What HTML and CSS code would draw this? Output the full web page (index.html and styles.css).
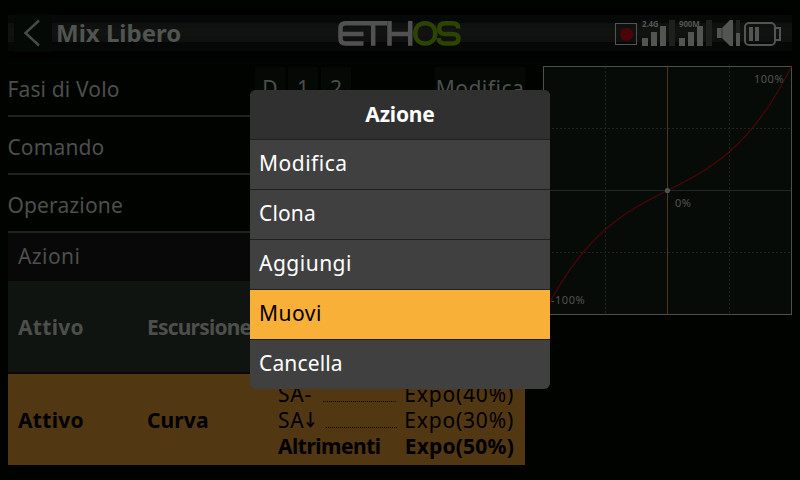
FILE: index.html
```html
<!DOCTYPE html>
<html lang="it">
<head>
<meta charset="utf-8">
<title>Mix Libero</title>
<link rel="stylesheet" href="styles.css">
</head>
<body>
<header class="topbar">
  <div class="back"><svg width="38" height="38" viewBox="0 0 38 38"><path d="M25 6.500 11.500 19 25 31.500" fill="none" stroke="#474b48" stroke-width="2.400"/></svg></div>
  <h1 class="title">Mix Libero</h1>
  <svg class="logo" width="124" height="26" viewBox="0 0 124 26" fill="none" stroke-width="4.500">
    <path d="M49 3.200H7.500Q2.500 3.200 2.500 8V18.500Q2.500 23.500 7.500 23.500H25.500M2.500 14H25.500M35.200 3.200V25.700M51.500 1V25.700M51.500 14H72M72.200 1V25.700" stroke="#515151"/>
    <path d="M87.200 3.200C94 3.200 97.200 8 97.200 13.400C97.200 19 94 23.500 87.200 23.500C80.500 23.500 77.300 19 77.300 13.400C77.300 8 80.500 3.200 87.200 3.200ZM120.400 8.500Q120.400 3.200 114.500 3.200H107Q101.200 3.200 101.200 8.500Q101.200 14 107 14H114.500Q120.400 14 120.400 18.500Q120.400 23.500 114.500 23.500H107Q101.200 23.500 100.500 18" stroke="#2d4300"/>
  </svg>
  <svg class="status" width="168" height="30" viewBox="0 0 168 30">
    <rect x=".5" y="4.500" width="21" height="21" fill="none" stroke="#515451"/>
    <circle cx="11.700" cy="15.300" r="6.500" fill="#4c0507"/>
    <path d="M54 1h6v26h-6zM91 1h6v26h-6zM121 1h4v13h-4z" fill="#1d211e"/>
    <g fill="#515652"><path d="M27 19h6v8h-6zM36 13h6v14h-6zM45 7h6v20h-6zM64 19h6v8h-6zM73 13h6v14h-6zM82 7h6v20h-6zM121 14h4v13h-4z"/>
    <path d="M102 9h5L115 1h3v26h-3L107 19h-5z"/>
    <path d="M134 8h4v14h-4zM140 8h4v14h-4z"/></g>
    <path d="M107 9v10" stroke="#343734"/>
    <g fill="none" stroke="#515652" stroke-width="2"><rect x="130" y="4" width="30" height="22" rx="4"/><path d="M161 9h4v12h-4"/></g>
    <text x="27" y="8">2.4G</text><text x="64" y="8">900M</text>
  </svg>
</header>
<main class="content">
  <section class="settings">
    <div class="row"><span class="label">Fasi di Volo</span>
      <span class="phases"><b class="chip">D</b><b class="chip">1</b><b class="chip">2</b></span>
      <span class="edit">Modifica</span></div>
    <div class="row"><span class="label">Comando</span></div>
    <div class="row"><span class="label">Operazione</span></div>
    <div class="group">Azioni</div>
    <div class="action">
      <span class="state">Attivo</span><span class="kind tight">Escursione</span>
    </div>
    <div class="action selected">
      <span class="state">Attivo</span><span class="kind">Curva</span>
      <div class="cases">
        <div class="case"><span>SA-</span><i class="dots"></i><span>Expo(40%)</span></div>
        <div class="case"><span>SA<svg class="down" width="9" height="16" viewBox="0 0 9 16"><path d="M4.500 0V14M1 10.500 4.500 14.500 8 10.500" fill="none" stroke="#000" stroke-width="1.800"/></svg></span><i class="dots"></i><span>Expo(30%)</span></div>
        <div class="case last"><span class="tight">Altrimenti</span><span>Expo(50%)</span></div>
      </div>
    </div>
  </section>
  <svg class="chart" width="249" height="249" viewBox="0 0 249 249">
    <rect x=".5" y=".5" width="248" height="248" fill="#070b08" stroke="#4c504d"/>
    <path d="M62.500 1V248M186.500 1V248M1 62.500H248M1 186.500H248" stroke="#202421" stroke-dasharray="2 2"/>
    <path d="M1 124.500H248" stroke="#232724"/>
    <path d="M124.500 0V249" stroke="#513712"/>
    <path d="M.5 248.500C83.200 83.200 165.800 165.800 248.500 .5" fill="none" stroke="#4c0507" stroke-width="1.200"/>
    <circle cx="124.500" cy="124.500" r="2.600" fill="#505450"/>
    <text x="211" y="17">100%</text><text x="132" y="141">0%</text><text x="8" y="238">-100%</text>
  </svg>
</main>
<div class="menu">
  <div class="menu-title">Azione</div>
  <div class="item wide">Modifica</div>
  <div class="item">Clona</div>
  <div class="item wide">Aggiungi</div>
  <div class="item wide active">Muovi</div>
  <div class="item">Cancella</div>
</div>
</body>
</html>
```
FILE: styles.css
```css
* { box-sizing: border-box; }
body {
  margin: 0;
  width: 800px;
  height: 480px;
  overflow: hidden;
  background: #000300;
  color: #4c4f4c;
  font: 21px/30px "Noto Sans", sans-serif;
  letter-spacing: .15px;
}
.topbar {
  display: flex;
  align-items: center;
  height: 50px;
  margin: 8px 8px 0;
  padding-left: 6px;
  background: linear-gradient(#000 0 7px, #070908 7px 15px, #0f100f 15px 20px, #101310 20px 28px, #0f100f 28px 34px, #060807 34px 43px, #000 43px);
}
.back { display: flex; width: 38px; height: 38px; background: #050906; }
.title { margin: 0 0 0 4px; width: 282px; font-size: 24px; line-height: 30px; letter-spacing: 0; color: #515451; }
.logo { flex: none; }
.status { flex: none; margin: 1px 0 0 153px; overflow: visible; }
.status text { font: 700 8px "Noto Sans", sans-serif; letter-spacing: -.2px; fill: #515652; }
.content { display: flex; gap: 18px; padding: 0 8px; }
.settings { width: 517px; }
.row { display: flex; height: 58px; padding-top: 4px; align-items: center; border-bottom: 2px solid #1f2220; }
.row:first-child { height: 59px; }
.label { width: 247px; text-indent: -.6px; }
.phases { display: flex; gap: 3px; width: 180px; }
.chip { width: 30px; height: 43px; line-height: 42px; text-align: center; font-weight: 400; background: #050906; }
.edit { width: 90px; height: 43px; line-height: 42px; text-align: center; letter-spacing: .5px; background: #050906; }
.group { height: 48px; padding: 0 10px; line-height: 47px; letter-spacing: .4px; background: #080808; }
.action { display: flex; align-items: center; height: 93px; padding: 0 10px; background: #0f1410; border-bottom: 2px solid #060706; font-weight: 700; letter-spacing: .1px; }
.action.selected { height: 91px; border: 0; background: #513712; color: #000; }
.state { width: 129px; letter-spacing: .3px; }
.kind { width: 131px; }
.tight { letter-spacing: -.8px; }
.cases { flex: 1; margin-right: 1px; font-weight: 400; letter-spacing: .8px; }
.case { display: flex; justify-content: space-between; height: 26px; line-height: 26px; }
.case.last { font-weight: 700; letter-spacing: .2px; }
.case .tight { letter-spacing: -.5px; }
.down { margin-left: 1px; }
.dots { flex: 1; height: 1px; margin: 20px 7px 0 11px; background: repeating-linear-gradient(90deg, #000 0 1px, transparent 1px 2px); }
.chart { flex: none; margin-top: 8px; }
.chart text { font: 11px "Noto Sans", sans-serif; letter-spacing: .5px; fill: #505350; }
.menu {
  position: absolute;
  left: 250px;
  top: 90px;
  width: 300px;
  border-radius: 6px;
  overflow: hidden;
  background: #404040;
  color: #fff;
}
.menu-title { height: 49px; line-height: 48px; text-align: center; font-weight: 700; letter-spacing: -.2px; background: #303030; }
.item { height: 50px; padding-left: 9px; line-height: 47px; border-top: 1px solid #202020; }
.item.wide { letter-spacing: .5px; }
.item.active { background: #f8b038; color: #000; }
```
